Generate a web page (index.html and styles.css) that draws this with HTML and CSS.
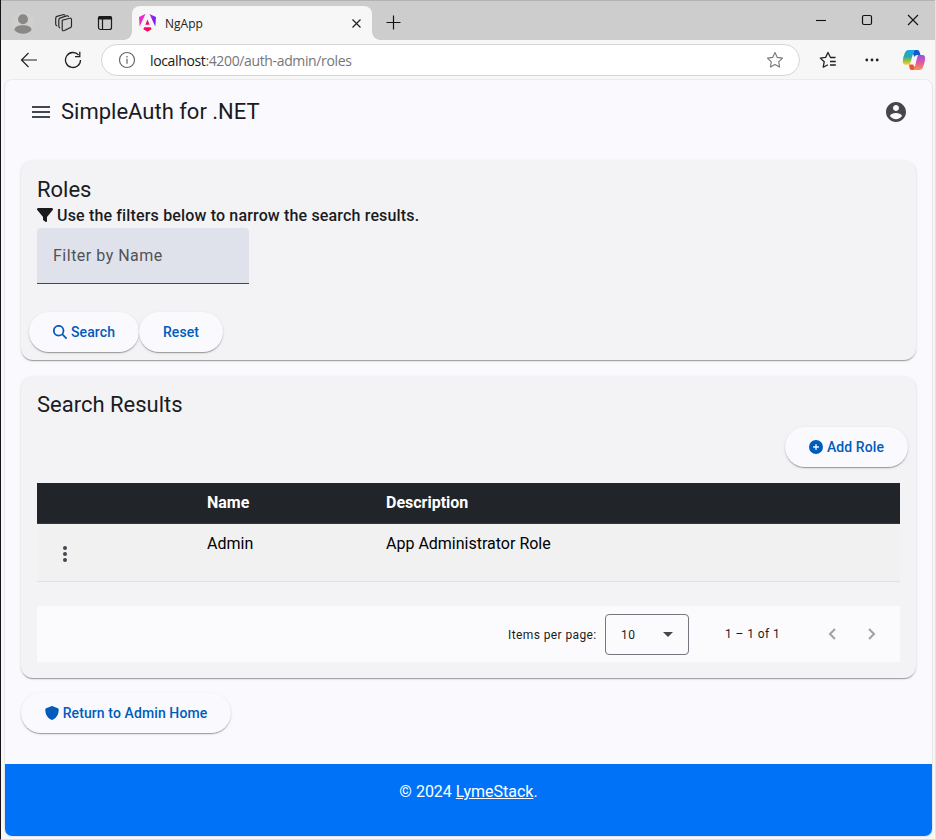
FILE: index.html
```html
<!DOCTYPE html>
<html lang="en">
<head>
<meta charset="utf-8">
<title>NgApp</title>
<link rel="stylesheet" href="styles.css">
</head>
<body>
<div class="window">
  <header class="tabstrip">
    <div class="strip-tools">
      <svg width="24" height="24" viewBox="0 0 24 24"><circle cx="12" cy="12" r="11" fill="#d2d0ce"/><circle cx="12" cy="8.3" r="5" fill="#8a8886"/><path d="M3.500 19c0-3.500 4-4.700 8.500-4.700s8.500 1.200 8.500 4.700c-2 2.600-5 3.800-8.500 3.800S5.500 21.600 3.500 19z" fill="#8a8886"/></svg>
      <svg width="20" height="20" viewBox="0 0 20 20" fill="none" stroke="#252525" stroke-width="1.150" stroke-linejoin="round" stroke-linecap="round"><path d="M8.200 7.200 15.700 5.200Q17.500 4.900 17.500 6.500V13Q17.500 14.200 16.500 14.600L10.500 17.500Q8.200 18.400 8.200 16.300zM5.700 14.800Q4.800 14.500 4.800 13V6.800Q4.900 5.500 6 5.100L12.500 2.900Q14 2.500 14.400 3.500M2.800 12.800Q1.700 12.400 1.700 11V5.200Q1.800 3.800 3 3.400L8.800 1.700Q10.200 1.300 10.700 2"/></svg>
      <svg width="16" height="16" viewBox="0 0 16 16" fill="none" stroke="#1b1b1b" stroke-width="1.200"><rect x="1.500" y="1.500" width="13" height="13" rx="2"/><path d="M1.500 4V3q0-1.500 1.500-1.500h10q1.500 0 1.500 1.500v1z" fill="#1b1b1b"/><path d="M5.500 4v10.500"/></svg>
    </div>
    <div class="tab">
      <svg class="tab-logo" width="17" height="18" viewBox="0 0 223 236"><defs><linearGradient id="ng" x1="0" y1="0" x2="1" y2=".25"><stop offset="0" stop-color="#f429c7"/><stop offset=".5" stop-color="#e126dd"/><stop offset="1" stop-color="#6c1cff"/></linearGradient><linearGradient id="nr" x1="0" y1="0" x2="1" y2="0"><stop offset="0" stop-color="#ff0090"/><stop offset="1" stop-color="#f01138"/></linearGradient></defs><path fill="url(#ng)" d="m222.100 39.200-8 125.900L137.300 0zM85 0 8.200 165.100 0 39.200 82.300 0z"/><path fill="url(#nr)" d="m165.300 200.600-54.200 30.900L57 200.600l11-26.600h86.300zM111.100 72.700l28.300 68.900H82.700z"/></svg>
      <span class="tab-title">NgApp</span>
      <svg width="11" height="11" viewBox="0 0 11 11" stroke="#222" stroke-width="1.200"><path d="m1.500 1.500 8 8m0-8-8 8"/></svg>
    </div>
    <svg class="new-tab" width="15" height="15" viewBox="0 0 15 15" stroke="#111" stroke-width="1.200"><path d="M7.500.5v14M.5 7.500h14"/></svg>
    <div class="window-buttons">
      <svg width="12" height="12" viewBox="0 0 12 12" stroke="#111" stroke-width="1.100"><path d="M1 6.500h10"/></svg>
      <svg width="12" height="12" viewBox="0 0 12 12" fill="none" stroke="#111" stroke-width="1.200"><rect x="1.500" y="1.500" width="9" height="9" rx="1.500"/></svg>
      <svg width="12" height="12" viewBox="0 0 12 12" stroke="#111" stroke-width="1.100"><path d="m1 1 10 10m0-10L1 11"/></svg>
    </div>
  </header>
  <div class="toolbar">
    <svg class="back" width="18" height="16" viewBox="0 0 18 16" fill="none" stroke="#222" stroke-width="1.200"><path d="M17 8H1.500M8.500 1l-7 7 7 7"/></svg>
    <svg class="reload" width="18" height="18" viewBox="0 0 18 18" fill="none" stroke="#222" stroke-width="1.300"><path d="M16.500 9A7.500 7.500 0 1 1 14.600 4M15.800.8v4.800H11"/></svg>
    <div class="address">
      <svg width="18" height="18" viewBox="0 0 18 18" fill="none" stroke="#666" stroke-width="1.200"><circle cx="9" cy="9" r="7.500"/><path d="M9 7.800v5M9 5v1.500"/></svg>
      <span class="url"><b>localhost</b>:4200/auth-admin/roles</span>
      <svg class="star" width="18" height="18" viewBox="0 0 18 18" fill="none" stroke="#777" stroke-width="1.100" stroke-linejoin="round"><path d="m9 1.500 2.300 4.900 5.200.7-3.800 3.700.9 5.300L9 13.600l-4.600 2.500.9-5.300L1.500 7.100l5.200-.7z"/></svg>
    </div>
    <svg class="favorites" width="18" height="18" viewBox="0 0 18 18" fill="none" stroke="#222" stroke-width="1.300" stroke-linejoin="round"><path d="M16.500 6.500h-5L9 1.500 6.600 6.400l-5.300.7 3.900 3.700-1 5.400 4.700-2.500M11 10.500h5.800M11 14h5.800"/></svg>
    <svg class="more" width="14" height="4" viewBox="0 0 14 4" fill="#222"><circle cx="1.800" cy="2" r="1.400"/><circle cx="7" cy="2" r="1.400"/><circle cx="12.200" cy="2" r="1.400"/></svg>
    <svg class="copilot" width="24" height="22" viewBox="0 0 24 22"><defs><linearGradient id="ca" x1="0" y1="0" x2="0" y2="1"><stop offset="0" stop-color="#16a6ec"/><stop offset=".45" stop-color="#29a9a8"/><stop offset=".75" stop-color="#9cc43a"/><stop offset="1" stop-color="#ffd02f"/></linearGradient><linearGradient id="cb" x1="0" y1="0" x2="0" y2="1"><stop offset="0" stop-color="#9055e6"/><stop offset=".5" stop-color="#e0589f"/><stop offset="1" stop-color="#ff934f"/></linearGradient></defs><path fill="#1656d1" d="M12 1h3.500Q17 1 17.600 3l.8 3h-3.200q-2 0-2.600 2L11 5z"/><path fill="#f4512d" d="M7 15.500h4l2 3-1 2.500H9.500Q8 21 7.500 19z"/><path fill="url(#ca)" d="M6 1h7.500Q12 1.600 11.400 3.500L8.500 13.500Q7.900 15.700 6 15.700H4Q.3 15.700.8 11.500 1.200 7.500 3 3.500 4 1 6 1z"/><path fill="url(#cb)" d="M16 6h4.500q3 0 2.600 4-.4 4-2 8-1 3-3.700 3H10.500q1.600-.5 2.200-2.500L15 9z"/></svg>
  </div>
  <main class="page">
    <div class="app-bar">
      <svg width="18" height="12" viewBox="0 0 18 12" fill="#44474e"><path d="M0 0h18v2H0zM0 5h18v2H0zM0 10h18v2H0z"/></svg>
      <h1>SimpleAuth for .NET</h1>
      <svg class="account" width="24" height="24" viewBox="0 0 24 24" fill="#44474e"><path d="M12 2C6.480 2 2 6.480 2 12s4.480 10 10 10 10-4.480 10-10S17.520 2 12 2zm0 3c1.660 0 3 1.340 3 3s-1.340 3-3 3-3-1.340-3-3 1.340-3 3-3zm0 14.200c-2.500 0-4.710-1.280-6-3.220.03-1.990 4-3.080 6-3.080 1.990 0 5.970 1.090 6 3.080-1.290 1.940-3.500 3.220-6 3.220z"/></svg>
    </div>
    <section class="card filters">
      <h2>Roles</h2>
      <p class="hint"><svg width="16" height="16" viewBox="0 0 512 512" fill="#1a1b1f"><path d="M3.900 54.900C10.500 40.900 24.500 32 40 32h432c15.500 0 29.500 8.900 36.100 22.900s4.600 30.500-5.200 42.500L320 320.900V448c0 12.100-6.800 23.200-17.700 28.600s-23.800 4.300-33.500-3l-64-48c-8.100-6-12.800-15.500-12.800-25.600v-79.100L9 97.300C-.7 85.400-2.800 68.800 3.900 54.900z"/></svg><span>Use the filters below to narrow the search results.</span></p>
      <div class="field">Filter by Name</div>
      <div class="actions">
        <button class="button search"><svg width="14" height="14" viewBox="0 0 512 512"><path d="M416 208c0 45.900-14.900 88.300-40 122.700l126.600 126.700c12.500 12.500 12.500 32.800 0 45.300s-32.800 12.500-45.300 0L330.700 376c-34.400 25.200-76.800 40-122.700 40C93.100 416 0 322.900 0 208S93.100 0 208 0s208 93.100 208 208zM208 352a144 144 0 1 0 0-288 144 144 0 1 0 0 288z"/></svg><span>Search</span></button><button class="button reset"><span>Reset</span></button>
      </div>
    </section>
    <section class="card results">
      <h2>Search Results</h2>
      <div class="add-row"><button class="button add"><svg width="14" height="14" viewBox="0 0 512 512"><path d="M256 512a256 256 0 1 0 0-512 256 256 0 1 0 0 512zm-24-168v-64h-64c-13.300 0-24-10.700-24-24s10.700-24 24-24h64v-64c0-13.300 10.700-24 24-24s24 10.700 24 24v64h64c13.300 0 24 10.700 24 24s-10.700 24-24 24h-64v64c0 13.300-10.700 24-24 24s-24-10.700-24-24z"/></svg><span>Add Role</span></button></div>
      <div class="table">
        <div class="row head"><span></span><span>Name</span><span>Description</span></div>
        <div class="row"><span class="menu"><svg width="6" height="16" viewBox="0 0 6 16" fill="#44474e"><circle cx="3" cy="2" r="2"/><circle cx="3" cy="8" r="2"/><circle cx="3" cy="14" r="2"/></svg></span><span>Admin</span><span>App Administrator Role</span></div>
      </div>
      <div class="paginator">
        <span class="per-page">Items per page:</span>
        <div class="select"><span>10</span><svg width="10" height="5" viewBox="0 0 10 5"><path d="M0 0h10L5 5z" fill="#44474e"/></svg></div>
        <span class="range">1 – 1 of 1</span>
        <svg class="prev" width="8" height="12" viewBox="0 0 8 12"><path d="M7 1 2 6l5 5"/></svg>
        <svg class="next" width="8" height="12" viewBox="0 0 8 12"><path d="m1 1 5 5-5 5"/></svg>
      </div>
    </section>
    <button class="button return"><svg width="14" height="14" viewBox="0 0 14 14"><path d="M7 0q.4 0 .8.200l5 2.100q.9.400.9 1.300C13.700 8 12 12 7.600 13.800q-.6.300-1.200 0C2 12 .3 8 .3 3.600q0-.9.900-1.300l5-2.100Q6.600 0 7 0z"/></svg><span>Return to Admin Home</span></button>
    <footer><span>© 2024 <a>LymeStack</a>.</span></footer>
  </main>
</div>
</body>
</html>
```
FILE: styles.css
```css
* { box-sizing: border-box; }
body { margin: 0; width: 936px; height: 840px; overflow: hidden; background: #f7f7f7; font-family: Roboto, sans-serif; color: #1a1b1f; }
svg { display: block; flex: none; }
h1, h2, p { margin: 0; font-weight: 400; }
.window { height: 840px; border-left: 1px solid #161418; border-right: 1px solid #e3e3e3; border-bottom: 1px solid #dcdcdc; }
.tabstrip { height: 40px; background: #cdcdcd; border-top: 1px solid #b3b3b3; display: flex; align-items: center; padding-top: 5px; }
.strip-tools { display: flex; align-items: center; width: 131px; padding-left: 10px; gap: 18px; }
.strip-tools svg:nth-child(2) { margin-left: 1px; }
.strip-tools svg:last-child { margin-left: 5px; }
.tab { position: relative; width: 240px; height: 34px; background: #f7f7f7; border-radius: 8px 8px 0 0; display: flex; align-items: center; padding: 0 10px 0 7px; }
.tab::before, .tab::after { content: ""; position: absolute; bottom: 0; width: 8px; height: 8px; }
.tab::before { left: -8px; background: radial-gradient(circle at 0 0, transparent 7.5px, #f7f7f7 8px); }
.tab::after { right: -8px; background: radial-gradient(circle at 100% 0, transparent 7.5px, #f7f7f7 8px); }
.tab-title { flex: 1; margin-left: 9px; font: 12px "Open Sans", sans-serif; color: #222; }
.new-tab { margin: -1px 0 0 14px; }
.window-buttons { display: flex; gap: 34px; margin: -6px 16px 0 auto; }
.toolbar { height: 40px; display: flex; align-items: center; background: #f7f7f7; }
.back { margin-left: 19px; }
.reload { margin-left: 26px; }
.address { display: flex; align-items: center; width: 699px; height: 32px; margin-left: 19px; padding: 0 15px 0 16px; border: 1px solid #d6d6d6; border-radius: 16px; background: #fff; }
.url { flex: 1; margin-left: 14px; font: 14px "Open Sans", sans-serif; letter-spacing: -.36px; color: #767676; }
.url b { font-weight: 400; color: #1a1a1a; }
.favorites { margin-left: 19px; }
.more { margin-left: 28px; }
.copilot { margin-left: 23px; }
.page { display: flex; flex-direction: column; width: 929px; height: 758px; margin: -1px 0 0 3px; background: #faf9fe; border: 1px solid #e6e6e8; border-top-color: #ebebed; border-radius: 8px; overflow: hidden; }
.app-bar { height: 64px; display: flex; align-items: center; padding: 0 24px 0 27px; }
.app-bar h1 { font-size: 22px; line-height: 28px; margin-left: 11px; }
.account { margin-left: auto; }
.card { width: 895px; margin-left: 16px; border-radius: 12px; background: #f3f3f6; box-shadow: 0 2px 1px -1px rgba(0,0,0,.2), 0 1px 1px rgba(0,0,0,.14), 0 1px 3px rgba(0,0,0,.12); }
.card h2 { font-size: 22px; line-height: 28px; }
.filters { height: 200px; margin-top: 16px; padding: 16px 8px 8px 16px; }
.hint { display: flex; align-items: center; height: 24px; padding-bottom: 2px; font-size: 16px; font-weight: 500; gap: 4px; letter-spacing: .16px; }
.field { width: 212px; height: 56px; padding: 0 16px; border-bottom: 1px solid #44474e; border-radius: 4px 4px 0 0; background: #dfe2eb; font-size: 16px; line-height: 56px; letter-spacing: .5px; color: #505258; }
.actions { display: flex; margin: 28px 0 0 -8px; }
.button { display: flex; align-items: center; justify-content: center; height: 40px; padding: 0; gap: 4px; border: 0; border-radius: 20px; background: #faf9fe; color: #005cbb; font: 500 14px Roboto, sans-serif; letter-spacing: .1px; box-shadow: 0 2px 1px -1px rgba(0,0,0,.2), 0 1px 1px rgba(0,0,0,.14), 0 1px 3px rgba(0,0,0,.12); }
.button svg { fill: #005cbb; }
.search { width: 110px; }
.reset { width: 84px; }
.results { height: 302px; margin-top: 16px; padding: 15px 16px 16px; }
.add-row { display: flex; justify-content: flex-end; margin: 8px -8px 0 0; }
.add { width: 123px; }
.table { margin-top: 16px; }
.row { display: grid; grid-template-columns: 170px 179px 1fr; height: 58px; padding-top: 8px; border-bottom: 1px solid #dee2e6; background: #f1f1f2; color: #000; font-size: 16px; line-height: 24px; }
.head { height: 41px; background: #212529; border-bottom-color: #34383c; color: #fff; font-weight: 700; }
.menu { padding: 14px 0 0 25px; }
.paginator { height: 56px; margin-top: 24px; background: #fbfbfe; display: flex; align-items: center; font-size: 12px; letter-spacing: .4px; }
.per-page { width: 89px; margin: 1px 0 0 471px; white-space: nowrap; }
.select { width: 84px; height: 41px; margin: 1px 0 0 8px; padding: 0 15px; border: 1px solid #74777f; border-radius: 4px; display: flex; align-items: center; justify-content: space-between; }
.range { width: 56px; margin-left: 36px; white-space: nowrap; }
.prev, .next { fill: none; stroke: #a0a1a5; stroke-width: 2; }
.prev { margin-left: 47px; }
.next { margin-left: 32px; }
.return { width: 210px; min-height: 40px; margin: 15px 0 0 16px; }
footer { margin-top: auto; height: 72px; background: #0072f8; color: #fff; font-size: 16px; line-height: 24px; text-align: center; padding-top: 16px; }
footer a { text-decoration: underline; }
```
